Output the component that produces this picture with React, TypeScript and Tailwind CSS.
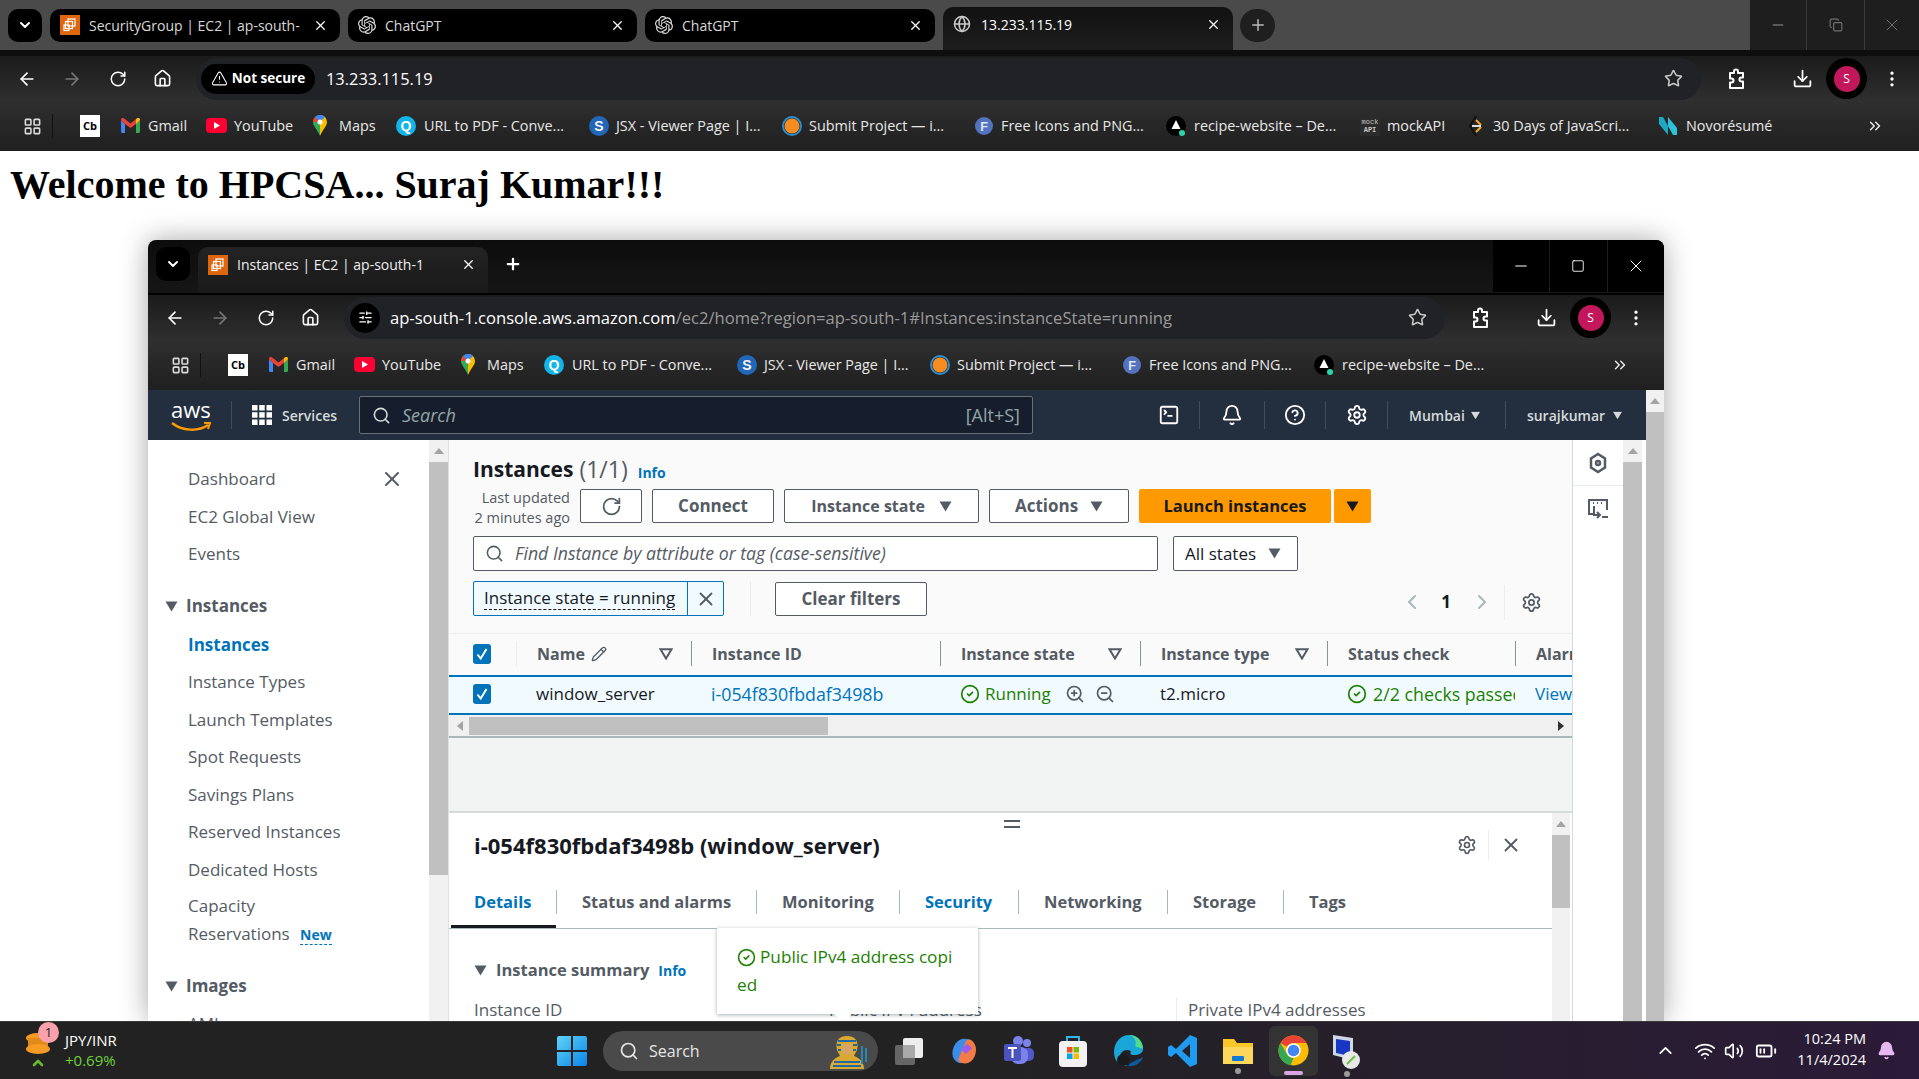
import React from 'react';
import {
  ArrowLeft, ArrowRight, RotateCw, Home, Star, Download, MoreVertical, ChevronDown, ChevronUp, Plus, X, Minus, Square, Copy,
  LayoutGrid, TriangleAlert, ChevronsRight, Search, SlidersHorizontal, Bell, CircleHelp, Settings, SquareTerminal, Pencil,
  CircleCheck, ZoomIn, ZoomOut, ChevronLeft, ChevronRight, Wifi, Volume2, BatteryMedium, Globe,
} from 'lucide-react';
import { SiOpenai } from 'react-icons/si';

const Ec2Icon = () => (
  <svg width="20" height="20" viewBox="0 0 20 20" className="shrink-0">
    <rect width="20" height="20" fill="#e0650f" />
    <g fill="none" stroke="#fff" strokeWidth="1.2">
      <rect x="8" y="4" width="7" height="7" />
      <rect x="5.5" y="6.5" width="7" height="7" />
      <rect x="4" y="10" width="5" height="5.5" />
    </g>
  </svg>
);

const GmailIcon = () => (
  <svg width="19" height="15" viewBox="0 0 19 15" className="shrink-0">
    <path d="M0 2v11.5A1.5 1.5 0 0 0 1.5 15H4V6z" fill="#4285f4" />
    <path d="M15 6v9h2.5a1.500 1.500 0 0 0 1.500-1.500V2z" fill="#34a853" />
    <path d="M0 2c0-2 2-2.500 3.200-1.500L9.500 5.500 15.800.5C17-.5 19 0 19 2L15 6 9.500 10 4 6z" fill="#ea4335" />
    <path d="M15 6l4-4c0-2-2-2.500-3.200-1.500L15 1.200z" fill="#fbbc04" />
  </svg>
);

const YoutubeIcon = () => (
  <svg width="21" height="15" viewBox="0 0 21 15" className="shrink-0">
    <rect width="21" height="15" rx="4" fill="#ff0033" />
    <path d="M8 4l6 3.500-6 3.500z" fill="#fff" />
  </svg>
);

const MapsIcon = () => (
  <svg width="14" height="21" viewBox="0 0 14 21" className="shrink-0">
    <path d="M7 0a7 7 0 0 0-7 7c0 4 4 7 7 14z" fill="#34a853" />
    <path d="M7 0a7 7 0 0 1 7 7c0 4-4 7-7 14z" fill="#fbbc04" />
    <path d="M2 2a7 7 0 0 1 10 0L7 7z" fill="#4285f4" />
    <path d="M0 7a7 7 0 0 1 2-5l5 5z" fill="#ea4335" />
    <circle cx="7" cy="7" r="2.500" fill="#fff" />
  </svg>
);

const CircleLetter = ({ bg, fg, letter, size = 20 }: { bg: string; fg: string; letter: string; size?: number }) => (
  <svg width={size} height={size} viewBox="0 0 20 20" className="shrink-0">
    <circle cx="10" cy="10" r="10" fill={bg} />
    <text x="10" y="15" textAnchor="middle" fontSize="14" fontWeight="700" fill={fg} fontFamily="Liberation Sans, sans-serif">{letter}</text>
  </svg>
);

const SubmitIcon = () => (
  <svg width="20" height="20" viewBox="0 0 20 20" className="shrink-0">
    <circle cx="10" cy="10" r="9" fill="none" stroke="#2a8fd0" strokeWidth="2" />
    <circle cx="10" cy="10" r="7.500" fill="#f68b1f" />
  </svg>
);

const RecipeIcon = () => (
  <svg width="20" height="20" viewBox="0 0 20 20" className="shrink-0">
    <circle cx="10" cy="10" r="10" fill="#000" />
    <path d="M10 4l4.500 9h-9z" fill="#fff" />
    <circle cx="16" cy="17" r="3" fill="#2dd4aa" />
  </svg>
);

const MockIcon = () => (
  <span className="shrink-0 w-5 h-5 flex flex-col items-center justify-center text-[7px] leading-[8px] font-['Liberation_Mono',monospace] text-[#c8c8c8] bg-[#2b2b2b]">
    <span>mock</span>
    <span className="font-bold">API</span>
  </span>
);

const ThirtyIcon = () => (
  <svg width="16" height="22" viewBox="0 0 16 22" className="shrink-0">
    <path d="M8 1L2 11l6 10" fill="none" stroke="#111" strokeWidth="2" />
    <path d="M8 5l5 5M8 17l5-5" fill="none" stroke="#f5a623" strokeWidth="2" />
    <path d="M4 11h9" stroke="#ddd" strokeWidth="2" />
  </svg>
);

const NovoIcon = () => (
  <svg width="20" height="20" viewBox="0 0 20 20" className="shrink-0">
    <path d="M1 1h4l5 9v9L1 8z" fill="#1ea7c5" />
    <path d="M19 19h-4l-5-9V1l9 11z" fill="#2cc3d8" />
  </svg>
);

const ExtensionIcon = () => (
  <svg width="20" height="22" viewBox="0 0 20 22" fill="none" stroke="currentColor" strokeWidth="2" className="shrink-0 ml-[26px]">
    <path d="M3 5h4V3.500a2 2 0 0 1 4 0V5h5v4.500h-1.500a2 2 0 0 0 0 4H16V20H3v-5.500h1.500a2 2 0 0 0 0-4H3z" strokeLinejoin="round" />
  </svg>
);

// start of each bookmark is fixed by its width
const bookmarks = [
  { w: 'w-[85px]', icon: <GmailIcon />, label: 'Gmail', gap: 'ml-[8px]' },
  { w: 'w-[107px]', icon: <YoutubeIcon />, label: 'YouTube', gap: 'ml-[7px]' },
  { w: 'w-[83px]', icon: <MapsIcon />, label: 'Maps', gap: 'ml-[12px]' },
  { w: 'w-[193px]', icon: <CircleLetter bg="#12b5ea" fg="#fff" letter="Q" />, label: 'URL to PDF - Conve...', gap: 'ml-[8px]' },
  { w: 'w-[193px]', icon: <CircleLetter bg="#2266b8" fg="#f6f6f6" letter="S" />, label: 'JSX - Viewer Page | I...', gap: 'ml-[7px]' },
  { w: 'w-[193px]', icon: <SubmitIcon />, label: 'Submit Project — i...', gap: 'ml-[7px]' },
  { w: 'w-[191px]', icon: <CircleLetter bg="#5472bd" fg="#dfe6f7" letter="F" size={18} />, label: 'Free Icons and PNG...', gap: 'ml-[8px]' },
  { w: 'w-[194px]', icon: <RecipeIcon />, label: 'recipe-website – De...', gap: 'ml-[8px]' },
  { w: 'w-[108px]', icon: <MockIcon />, label: 'mockAPI', gap: 'ml-[7px]' },
  { w: 'w-[190px]', icon: <ThirtyIcon />, label: '30 Days of JavaScri...', gap: 'ml-[9px]' },
  { w: 'w-[120px]', icon: <NovoIcon />, label: 'Novorésumé', gap: 'ml-[8px]' },
];

function Bookmarks({ count, right }: { count: number; right: string }) {
  return (
    <div className={`h-[50px] shrink-0 flex items-center bg-gradient-to-b from-[#2f2f2f] to-[#1f1f1f] text-[14.400px] text-[#e8e8e8] pl-[23px] ${right}`}>
      <LayoutGrid size={19} className="text-[#dcdcdc] shrink-0" />
      <span className="ml-[10px] w-px h-[24px] bg-[#111]" />
      <span className="ml-[27px] mr-[21px] w-[20px] h-[22px] bg-white text-black text-[11px] font-bold flex items-center justify-center shrink-0">Cb</span>
      {bookmarks.slice(0, count).map(b => (
        <span key={b.label} className={`${b.w} flex items-center shrink-0`}>
          {b.icon}
          <span className={`${b.gap} whitespace-nowrap`}>{b.label}</span>
        </span>
      ))}
      <ChevronsRight size={18} className="ml-auto text-[#e8e8e8]" />
    </div>
  );
}

function Toolbar({ children, pill }: { children: React.ReactNode; pill: string }) {
  return (
    <div className="h-[45px] shrink-0 flex items-center bg-gradient-to-b from-[#1b1b1b] to-[#2f2f2f] text-white">
      <ArrowLeft size={20} className="ml-[17px] shrink-0" />
      <ArrowRight size={20} className="ml-[25px] text-[#777] shrink-0" />
      <RotateCw size={18} className="ml-[27px] shrink-0" />
      <Home size={19} className="ml-[26px] shrink-0" />
      <div className={`ml-[24px] h-[42px] rounded-full bg-[#212226] flex items-center shrink-0 ${pill}`}>
        {children}
        <Star size={19} className="ml-auto mr-[18px] text-[#c8c8c8]" />
      </div>
      <ExtensionIcon />
      <Download size={21} className="ml-[45px] shrink-0" />
      <span className="ml-[13px] w-[41px] h-[41px] rounded-full bg-black flex items-center justify-center shrink-0">
        <span className="w-[26px] h-[26px] rounded-full bg-[#c2185b] text-[12px] flex items-center justify-center">S</span>
      </span>
      <MoreVertical size={20} className="ml-[15px] shrink-0" />
    </div>
  );
}

function ChromeTab({ icon, label, w, color }: { icon: React.ReactNode; label: string; w: string; color: string }) {
  return (
    <div className={`${w} h-[33px] flex items-center pl-[10px] pr-[12px] text-[14px] shrink-0 rounded-[10px] text-[#d8d8d8] ${color}`}>
      {icon}
      <span className="ml-[9px] whitespace-nowrap overflow-hidden flex-1">{label}</span>
      <X size={15} className="ml-[8px] text-white shrink-0" />
    </div>
  );
}

const Caret = ({ className }: { className?: string }) => (
  <svg width="13" height="11" viewBox="0 0 13 11" className={`shrink-0 ${className ?? ''}`}>
    <path d="M.5.500h12L6.500 10.500z" fill="currentColor" />
  </svg>
);

const FilterIcon = () => (
  <svg width="14" height="12" viewBox="0 0 14 12" className="shrink-0 text-[#545b64]">
    <path d="M1.500 1.200h11L7 10.500z" fill="none" stroke="currentColor" strokeWidth="2" />
  </svg>
);

function ScrollBar({ w, top, thumbH }: { w: string; top: string; thumbH: string }) {
  return (
    <div className={`${w} shrink-0 bg-[#f1f1f1] flex flex-col items-center overflow-hidden`}>
      <span className={`${top} flex items-center justify-center w-full shrink-0`}>
        <svg width="10" height="6" viewBox="0 0 10 6"><path d="M5 0l5 6H0z" fill="#a3a3a3" /></svg>
      </span>
      <span className={`${thumbH} w-full bg-[#c0c0c0] shrink-0`} />
    </div>
  );
}

const Btn = ({ w, children }: { w: string; children: React.ReactNode }) => (
  <button className={`${w} h-[34px] shrink-0 bg-white border border-[#545b64] rounded-[2px] text-[#545b64] font-bold text-[17px] flex items-center justify-center`}>
    {children}
  </button>
);

const navCls = 'h-[37.500px] flex items-center pl-[40px] text-[17px] shrink-0';
const navGrey = `${navCls} text-[#545b64]`;

function Sidebar() {
  return (
    <div className="w-[281px] shrink-0 bg-white pt-[20px] overflow-hidden">
      <div className={`${navGrey} pr-[25px] justify-between`}>
        Dashboard
        <X size={24} className="text-[#545b64]" strokeWidth={2} />
      </div>
      <div className={navGrey}>EC2 Global View</div>
      <div className={navGrey}>Events</div>
      <div className="h-[39px] mt-[14px] flex items-center pl-[17px] text-[#545b64] font-bold text-[17px]">
        <Caret className="mr-[8px]" />Instances
      </div>
      <div className={`${navCls} text-[#0073bb] font-bold`}>Instances</div>
      <div className={navGrey}>Instance Types</div>
      <div className={navGrey}>Launch Templates</div>
      <div className={navGrey}>Spot Requests</div>
      <div className={navGrey}>Savings Plans</div>
      <div className={navGrey}>Reserved Instances</div>
      <div className={navGrey}>Dedicated Hosts</div>
      <div className="pl-[40px] pt-[4px] text-[#545b64] text-[17px] leading-[28px]">
        <div>Capacity</div>
        <div>Reservations <span className="ml-[6px] text-[#0073bb] font-bold text-[14px] border-b border-dashed border-[#0073bb]">New</span></div>
      </div>
      <div className="h-[38px] mt-[18px] flex items-center pl-[17px] text-[#545b64] font-bold text-[17px]">
        <Caret className="mr-[8px]" />Images
      </div>
      <div className={navGrey}>AMIs</div>
    </div>
  );
}

const headBase = 'h-[25px] flex items-center border-l pl-[20px] font-bold text-[#545b64] text-[16px] shrink-0 overflow-hidden whitespace-nowrap';
const headCell = `${headBase} border-[#879596]`;
const rowCell = 'flex items-center pl-[20px] shrink-0 overflow-hidden whitespace-nowrap';

const Check = () => (
  <span className="w-[18px] h-[20px] rounded-[3px] bg-[#0073bb] flex items-center justify-center">
    <svg width="12" height="14" viewBox="0 0 12 14"><path d="M1.500 7.500l3.200 4L10.500 2" fill="none" stroke="#fff" strokeWidth="2" /></svg>
  </span>
);

function InstancesTable() {
  return (
    <>
      <div className="h-[42px] shrink-0 flex items-center border-t border-[#eaeded] bg-[#fafafa] pb-[2px]">
        <span className="w-[67px] shrink-0 pl-[24px] flex"><Check /></span>
        <div className={`w-[175px] ${headBase} border-[#eaeded] pr-[18px]`}>Name<Pencil size={16} className="ml-[6px]" /><span className="ml-auto"><FilterIcon /></span></div>
        <div className={`w-[249px] ${headCell}`}>Instance ID</div>
        <div className={`w-[200px] ${headCell} pr-[18px]`}>Instance state<span className="ml-auto"><FilterIcon /></span></div>
        <div className={`w-[187px] ${headCell} pr-[18px]`}>Instance type<span className="ml-auto"><FilterIcon /></span></div>
        <div className={`w-[188px] ${headCell}`}>Status check</div>
        <div className={`w-[57px] ${headCell}`}>Alarm status</div>
      </div>
      <div className="h-[40px] shrink-0 flex items-center border-y-2 border-[#0073bb] bg-[#f1faff] overflow-hidden pb-[2px]">
        <span className="w-[67px] shrink-0 pl-[24px] flex"><Check /></span>
        <div className={`w-[175px] ${rowCell} text-[17px] text-[#16191f]`}>window_server</div>
        <div className={`w-[249px] ${rowCell} text-[#0073bb] text-[17.800px]`}>i-054f830fbdaf3498b</div>
        <div className={`w-[200px] ${rowCell} text-[17px] text-[#1d8102]`}>
          <CircleCheck size={20} className="mr-[5px]" />Running
          <ZoomIn size={20} className="ml-[14px] text-[#545b64]" />
          <ZoomOut size={20} className="ml-[10px] text-[#545b64]" />
        </div>
        <div className={`w-[187px] ${rowCell} text-[17px] text-[#16191f]`}>t2.micro</div>
        <div className={`w-[188px] ${rowCell} text-[#1d8102] text-[17.800px]`}>
          <CircleCheck size={20} className="mr-[6px] shrink-0" />2/2 checks passed
        </div>
        <div className={`w-[57px] ${rowCell} text-[17px] text-[#0073bb]`}>View alarms</div>
      </div>
      <div className="h-[23px] shrink-0 flex items-center bg-[#f0f0f0] border-b-2 border-[#aab7b8]">
        <svg width="6" height="10" viewBox="0 0 6 10" className="ml-[8px]"><path d="M6 0v10L0 5z" fill="#a3a3a3" /></svg>
        <span className="ml-[6px] w-[359px] h-[18px] bg-[#c0c0c0]" />
        <svg width="6" height="10" viewBox="0 0 6 10" className="ml-auto mr-[8px]"><path d="M0 0v10l6-5z" fill="#333" /></svg>
      </div>
    </>
  );
}

const detailTabs = [
  { label: 'Status and alarms', w: 'w-[200px]' },
  { label: 'Monitoring', w: 'w-[143px]' },
  { label: 'Security', w: 'w-[119px]', blue: true },
  { label: 'Networking', w: 'w-[149px]' },
  { label: 'Storage', w: 'w-[116px]' },
  { label: 'Tags', w: 'w-[90px]' },
];

function DetailPanel() {
  return (
    <div className="flex-1 min-h-0 flex bg-white border-t-2 border-[#d5dbdb] overflow-hidden">
      <div className="w-[1103px] shrink-0 relative overflow-hidden">
        <div className="flex justify-center h-[16px] pt-[7px] pl-[22px]">
          <span className="w-[16px] h-[8px] border-y-2 border-[#545b64]" />
        </div>
        <div className="flex items-center h-[32px] pl-[25px] pr-[30px]">
          <span className="font-bold text-[22px] text-[#16191f]">i-054f830fbdaf3498b (window_server)</span>
          <Settings size={20} className="ml-auto text-[#545b64]" />
          <span className="w-px h-[30px] bg-[#eaeded] ml-[11px] mr-[11px]" />
          <X size={22} className="text-[#545b64]" />
        </div>
        <div className="h-[57px] mt-[11px] pt-[4px] flex items-center border-b border-[#a9b9bd] relative text-[16.500px] font-bold text-[#545b64]">
          <span className="w-[108px] pl-[25px] shrink-0 border-r border-[#aab7b8] text-[#0073bb]">Details</span>
          {detailTabs.map(t => (
            <span key={t.label} className={`${t.w} shrink-0 pl-[25px] ${t.label === 'Tags' ? '' : 'border-r border-[#aab7b8]'} ${t.blue ? 'text-[#0073bb]' : ''}`}>{t.label}</span>
          ))}
          <span className="absolute left-[2px] bottom-0 w-[105px] h-[3px] bg-[#16191f]" />
        </div>
        <div className="pl-[25px] pt-[29px] flex items-center text-[16.500px]">
          <Caret className="mr-[9px] text-[#545b64]" />
          <span className="font-bold text-[#545b64]">Instance summary</span>
          <span className="ml-[9px] text-[14px] font-bold text-[#0073bb]">Info</span>
        </div>
        <div className="pl-[25px] pt-[14px] flex text-[17px] text-[#545b64] whitespace-nowrap">
          <span className="w-[355px]">Instance ID</span>
          <span className="w-[347px]">Public IPv4 address</span>
          <span className="border-l border-[#eaeded] pl-[11px]">Private IPv4 addresses</span>
        </div>
        <div className="absolute left-[268px] top-[115px] w-[261px] h-[86px] bg-white shadow-[0_1px_4px_rgba(0,28,36,0.35)] px-[20px] pt-[15px] text-[#1d8102] text-[17.200px] leading-[28px] break-all">
          <CircleCheck size={19} className="inline mr-[4px] -mt-[2px]" />
          Public IPv4 address copied
          <span className="absolute left-[120px] -bottom-[6px] w-[12px] h-[12px] rotate-45 bg-white" />
        </div>
      </div>
      <ScrollBar w="w-[18px]" top="h-[22px]" thumbH="h-[73px]" />
    </div>
  );
}

function MainContent() {
  return (
    <div className="w-[1123px] shrink-0 flex flex-col bg-[#f2f3f3] overflow-hidden">
      <div className="h-[193px] shrink-0 bg-[#fafafa] pl-[24px] pr-[40px]">
        <div className="h-[49px] flex items-end pb-[3px]">
          <span className="text-[21px] font-bold text-[#16191f] leading-[34px]">Instances</span>
          <span className="ml-[6px] text-[23px] text-[#545b64] leading-[34px]">(1/1)</span>
          <span className="ml-[10px] mb-[3px] text-[14px] font-bold text-[#0073bb]">Info</span>
        </div>
        <div className="flex items-center h-[34px] gap-[10px]">
          <span className="w-[97px] mt-[4px] text-[14.500px] leading-[20px] text-[#545b64] text-right whitespace-nowrap">Last updated<br />2 minutes ago</span>
          <Btn w="w-[62px]"><RotateCw size={21} /></Btn>
          <Btn w="w-[122px]">Connect</Btn>
          <Btn w="w-[195px]"><span className="text-[16px]">Instance state</span><Caret className="ml-[14px]" /></Btn>
          <Btn w="w-[140px]">Actions<Caret className="ml-[12px]" /></Btn>
          <button className="w-[192px] h-[34px] bg-[#ff9900] rounded-[2px] text-[#16191f] font-bold text-[16.500px]">Launch instances</button>
          <button className="-ml-[7px] w-[37px] h-[34px] bg-[#ff9900] rounded-[2px] text-[#16191f] flex items-center justify-center"><Caret /></button>
        </div>
        <div className="flex items-center mt-[13px] h-[35px]">
          <div className="w-[685px] h-[35px] bg-white border border-[#545b64] rounded-[2px] flex items-center pl-[11px] text-[17.700px] italic text-[#545b64]">
            <Search size={19} className="mr-[11px]" />Find Instance by attribute or tag (case-sensitive)
          </div>
          <div className="ml-[15px] w-[125px] h-[35px] bg-white border border-[#545b64] rounded-[2px] flex items-center pl-[11px] text-[17px] text-[#16191f]">
            All states<Caret className="ml-[12px] text-[#545b64]" />
          </div>
        </div>
        <div className="flex items-center mt-[10px] h-[35px] -mr-[10px]">
          <div className="w-[251px] h-[35px] shrink-0 bg-[#f1faff] border border-[#0073bb] rounded-[2px] flex items-center text-[17px] text-[#16191f]">
            <span className="w-[213px] shrink-0 pl-[10px] pb-[1px] whitespace-nowrap overflow-hidden"><span className="border-b border-dashed border-[#16191f]">Instance state = running</span></span>
            <span className="flex-1 h-full border-l border-[#0073bb] flex items-center justify-center"><X size={22} className="text-[#545b64]" /></span>
          </div>
          <span className="ml-[26px] w-px h-[35px] bg-[#eaeded]" />
          <span className="ml-[24px]"><Btn w="w-[152px]">Clear filters</Btn></span>
          <div className="ml-auto flex items-center mt-[7px]">
            <ChevronLeft size={24} className="text-[#aab7b8]" strokeWidth={2} />
            <span className="ml-[17px] font-bold text-[17px] text-[#16191f]">1</span>
            <ChevronRight size={24} className="ml-[19px] text-[#aab7b8]" strokeWidth={2} />
            <span className="ml-[10px] w-px h-[35px] bg-[#eaeded]" />
            <Settings size={21} className="ml-[16px] text-[#545b64]" />
          </div>
        </div>
      </div>
      <InstancesTable />
      <div className="h-[73px] shrink-0 bg-[#f2f3f3]" />
      <DetailPanel />
    </div>
  );
}

function AwsNav() {
  return (
    <div className="h-[50px] shrink-0 flex items-center bg-[#232f3e] text-[#d5dbdb] text-[14px] font-semibold">
      <span className="ml-[23px] w-[40px] h-[36px] relative shrink-0 block">
        <span className="block text-[22px] leading-[24px] font-normal text-white">aws</span>
        <svg width="40" height="12" viewBox="0 0 40 12" className="absolute left-0 bottom-0">
          <path d="M1 2c10 8 26 9 36 2" fill="none" stroke="#ff9900" strokeWidth="2.500" />
          <path d="M33 2l6 0-2 6" fill="none" stroke="#ff9900" strokeWidth="2" />
        </svg>
      </span>
      <span className="ml-[20px] w-px h-[28px] bg-[#414d5c]" />
      <svg width="20" height="20" viewBox="0 0 20 20" className="ml-[20px] shrink-0" fill="#fff">
        <rect width="5.500" height="5.500" /><rect x="7.200" width="5.500" height="5.500" /><rect x="14.500" width="5.500" height="5.500" />
        <rect y="7.200" width="5.500" height="5.500" /><rect x="7.200" y="7.200" width="5.500" height="5.500" /><rect x="14.500" y="7.200" width="5.500" height="5.500" />
        <rect y="14.500" width="5.500" height="5.500" /><rect x="7.200" y="14.500" width="5.500" height="5.500" /><rect x="14.500" y="14.500" width="5.500" height="5.500" />
      </svg>
      <span className="ml-[10px] w-[56px] whitespace-nowrap">Services</span>
      <div className="ml-[21px] w-[674px] h-[38px] shrink-0 bg-[#161e2d] border border-[#687078] rounded-[2px] flex items-center px-[12px] font-normal text-[#95a5a6] text-[18px]">
        <Search size={19} className="text-[#d5dbdb]" />
        <span className="ml-[11px] italic">Search</span>
        <span className="ml-auto">[Alt+S]</span>
      </div>
      <SquareTerminal size={22} className="ml-[125px] shrink-0 text-white" />
      <span className="ml-[19px] w-px h-[28px] bg-[#414d5c]" />
      <Bell size={22} className="ml-[21px] shrink-0 text-white" />
      <span className="ml-[21px] w-px h-[28px] bg-[#414d5c]" />
      <CircleHelp size={22} className="ml-[19px] shrink-0 text-white" />
      <span className="ml-[19px] w-px h-[28px] bg-[#414d5c]" />
      <Settings size={22} className="ml-[20px] shrink-0 text-white" />
      <span className="ml-[19px] w-px h-[28px] bg-[#414d5c]" />
      <span className="ml-[21px]">Mumbai</span>
      <Caret className="ml-[4px] scale-75 text-[#d5dbdb]" />
      <span className="ml-[23px] w-px h-[28px] bg-[#414d5c]" />
      <span className="ml-[21px]">surajkumar</span>
      <Caret className="ml-[6px] scale-75 text-[#d5dbdb]" />
    </div>
  );
}

function InnerWindow() {
  return (
    <div className="ml-[148px] w-[1516px] h-[781px] rounded-t-[8px] overflow-hidden flex flex-col shadow-[0_0_28px_rgba(0,0,0,0.35)]">
      <div className="h-[55px] shrink-0 flex bg-gradient-to-b from-[#0c0c0c] to-[#161616] border-b-2 border-black">
        <span className="ml-[8px] mt-[7px] w-[34px] h-[34px] rounded-[10px] bg-black flex items-center justify-center text-white shrink-0"><ChevronDown size={16} strokeWidth={3} /></span>
        <div className="ml-[8px] mt-[7px] w-[290px] h-[46px] rounded-t-[10px] bg-gradient-to-b from-[#232323] to-[#1a1a1a] flex items-center pb-[11px] pl-[10px] pr-[12px] text-[14px] text-[#eee] shrink-0">
          <Ec2Icon />
          <span className="ml-[9px] flex-1 whitespace-nowrap">Instances | EC2 | ap-south-1</span>
          <X size={15} className="text-white" />
        </div>
        <Plus size={18} className="ml-[16px] mt-[15px] text-white shrink-0" strokeWidth={3} />
        <div className="ml-auto w-[171px] h-[52px] bg-black flex text-white shrink-0">
          <span className="flex-1 flex items-center justify-center"><Minus size={18} strokeWidth={1.500} /></span>
          <span className="flex-1 flex items-center justify-center border-l border-[#1d1d1d]"><Square size={14} strokeWidth={1.500} /></span>
          <span className="flex-1 flex items-center justify-center border-l border-[#1d1d1d]"><X size={20} strokeWidth={1.200} /></span>
        </div>
      </div>
      <Toolbar pill="w-[1101px]">
        <span className="ml-[6px] w-[30px] h-[30px] rounded-full bg-black flex items-center justify-center"><SlidersHorizontal size={15} /></span>
        <span className="ml-[10px] mt-[1px] text-[16.600px] whitespace-nowrap">ap-south-1.console.aws.amazon.com<span className="text-[#9a9a9a]">/ec2/home?region=ap-south-1#Instances:instanceState=running</span></span>
      </Toolbar>
      <Bookmarks count={8} right="pr-[35px]" />
      <div className="flex-1 min-h-0 flex">
        <div className="w-[1498px] shrink-0 flex flex-col">
          <AwsNav />
          <div className="flex-1 min-h-0 flex bg-white">
            <Sidebar />
            <ScrollBar w="w-[20px] border-r border-[#e0e0e0]" top="h-[22px]" thumbH="h-[413px]" />
            <MainContent />
            <div className="w-[51px] shrink-0 bg-white border-l border-[#d5dbdb]">
              <div className="h-[46px] border-b border-[#eaeded] flex items-center justify-center text-[#545b64]">
                <svg width="18" height="22" viewBox="0 0 18 22" fill="none" stroke="currentColor" strokeWidth="2.500"><path d="M9 2l7 4.500v9L9 20l-7-4.500v-9z" /><circle cx="9" cy="11" r="2" /></svg>
              </div>
              <div className="h-[46px] flex items-center justify-center text-[#545b64]">
                <svg width="22" height="22" viewBox="0 0 22 22" fill="none" stroke="currentColor" strokeWidth="2"><path d="M6 16H2V2h18v10" /><path d="M6 5h1M10 5h1M14 5h1" /><path d="M7 8v9h5M10 14l3 3-3 3M15 19h6" /></svg>
              </div>
            </div>
            <ScrollBar w="w-[19px]" top="h-[22px]" thumbH="h-[600px]" />
          </div>
        </div>
        <ScrollBar w="w-[18px]" top="h-[22px]" thumbH="h-[620px]" />
      </div>
    </div>
  );
}

function OuterChrome() {
  return (
    <>
      <div className="h-[50px] shrink-0 flex items-center bg-[#4a4a4a]">
        <span className="ml-[8px] w-[34px] h-[33px] rounded-[10px] bg-black flex items-center justify-center text-white shrink-0"><ChevronDown size={16} strokeWidth={3} /></span>
        <span className="ml-[8px] flex gap-[8px]">
          <ChromeTab w="w-[290px]" color="bg-black" icon={<Ec2Icon />} label="SecurityGroup | EC2 | ap-south-" />
          <ChromeTab w="w-[289px]" color="bg-black" icon={<SiOpenai size={18} className="text-[#ddd] shrink-0" />} label="ChatGPT" />
          <ChromeTab w="w-[290px]" color="bg-black" icon={<SiOpenai size={18} className="text-[#ddd] shrink-0" />} label="ChatGPT" />
        </span>
        <div className="ml-[8px] w-[290px] h-[43px] self-end rounded-t-[10px] bg-gradient-to-b from-[#111] to-[#1e1e1e] flex items-center pb-[9px] pl-[10px] pr-[12px] text-[14px] text-white shrink-0">
          <Globe size={18} className="text-[#ccc] shrink-0" />
          <span className="ml-[10px] flex-1">13.233.115.19</span>
          <X size={15} />
        </div>
        <span className="ml-[7px] w-[35px] h-[33px] rounded-full bg-[#1f1f1f] flex items-center justify-center text-[#bbb] shrink-0"><Plus size={18} /></span>
        <div className="ml-auto w-[169px] h-[50px] bg-[#1e1e1e] flex text-[#6f6f6f] shrink-0">
          <span className="w-[56px] flex items-center justify-center"><Minus size={16} /></span>
          <span className="w-[58px] flex items-center justify-center border-l border-[#3a3a3a]"><Copy size={14} /></span>
          <span className="flex-1 flex items-center justify-center border-l border-[#3a3a3a]"><X size={20} strokeWidth={1.200} /></span>
        </div>
      </div>
      <div className="h-[6px] shrink-0 bg-[#0e0e0e]" />
      <Toolbar pill="w-[1505px]">
        <span className="ml-[5px] h-[30px] w-[114px] rounded-full bg-black flex items-center justify-center gap-[4px] text-[13.500px] font-bold"><TriangleAlert size={17} strokeWidth={1.500} />Not secure</span>
        <span className="ml-[11px] mt-[1px] text-[16.400px]">13.233.115.19</span>
      </Toolbar>
      <Bookmarks count={11} right="pr-[35px]" />
    </>
  );
}

function Taskbar() {
  const tile = 'w-[45px] flex flex-col items-center shrink-0';
  return (
    <div className="h-[58px] shrink-0 flex items-center bg-gradient-to-r from-[#222] via-[#222] to-[#2b1a38] text-white border-t border-[#3a3a3a] relative z-10">
      <div className="ml-[25px] w-[26px] flex flex-col items-center relative">
        <svg width="26" height="26" viewBox="0 0 26 26"><ellipse cx="13" cy="8" rx="12" ry="5" fill="#f59a23" /><rect x="3" y="8" width="20" height="10" fill="#e08a1a" /><ellipse cx="13" cy="19" rx="12" ry="5" fill="#f59a23" /></svg>
        <ChevronUp size={16} strokeWidth={4} className="text-[#66b92e] -mt-[1px]" />
        <span className="absolute -top-[8px] left-[13px] w-[21px] h-[21px] rounded-full bg-[#f8a1ad] text-[#222] text-[13px] flex items-center justify-center">1</span>
      </div>
      <div className="ml-[14px] w-[492px] shrink-0 text-[15px] leading-[20px] pb-[2px]">
        <div>JPY/INR</div>
        <div className="text-[#6fcf3c]">+0.69%</div>
      </div>
      <svg width="30" height="30" viewBox="0 0 30 30" className="shrink-0">
        <defs><linearGradient id="w" x1="0" y1="0" x2="1" y2="1"><stop offset="0" stopColor="#5fd4f8" /><stop offset="1" stopColor="#0a84e8" /></linearGradient></defs>
        <path d="M0 2a2 2 0 0 1 2-2h12v14H0zM16 0h12a2 2 0 0 1 2 2v12H16zM0 16h14v14H2a2 2 0 0 1-2-2zM16 16h14v12a2 2 0 0 1-2 2H16z" fill="url(#w)" />
      </svg>
      <div className="ml-[16px] w-[275px] h-[40px] rounded-full bg-[#4a4a4a] flex items-center pl-[16px] pr-[8px] shrink-0 text-[#e6e6e6] text-[16px]">
        <Search size={20} />
        <span className="ml-[10px]">Search</span>
        <svg width="46" height="38" viewBox="0 0 46 38" className="ml-auto">
          <path d="M6 37c0-8 5-11 10-13-1-3-5-6-3-14 2-8 18-8 20 0 2 8-2 11-3 14 5 2 10 5 10 13z" fill="#d9a931" />
          <path d="M14 9h18M13 13h4M29 13h4M14 18h3M29 18h3M10 30h26M9 34h28" stroke="#1f6aa5" strokeWidth="2" />
          <ellipse cx="23" cy="17" rx="5" ry="6" fill="#d6a565" />
          <path d="M38 14v18M42 16v14" stroke="#2a86b5" strokeWidth="2" />
        </svg>
      </div>
      <span className={`${tile} ml-[8px]`}>
        <svg width="32" height="32" viewBox="0 0 32 32"><rect x="2" y="10" width="20" height="20" rx="2" fill="#666" /><rect x="10" y="3" width="20" height="20" rx="2" fill="#eee" /><rect x="10" y="10" width="12" height="13" fill="#aaa" /></svg>
      </span>
      <span className={`${tile} ml-[10px]`}>
        <svg width="32" height="32" viewBox="0 0 32 32"><path d="M6 24C2 18 6 6 14 4c4-1 8 0 10 3L16 26c-3 4-7 2-10-2z" fill="#3b8de8" /><path d="M26 8c4 5 2 17-6 20-4 1-8 0-10-3L18 6c3-3 6-1 8 2z" fill="#f47b45" /><path d="M13 14l6-5 5 4-6 6z" fill="#9a5cf0" /></svg>
      </span>
      <span className={`${tile} ml-[10px]`}>
        <svg width="32" height="32" viewBox="0 0 32 32"><circle cx="24" cy="8" r="4" fill="#7b83eb" /><circle cx="15" cy="6" r="5" fill="#7b83eb" /><rect x="19" y="13" width="12" height="13" rx="5" fill="#5059c9" /><rect x="8" y="12" width="17" height="17" rx="7" fill="#7b83eb" /><rect x="1" y="9" width="17" height="17" rx="2" fill="#4b53bc" /><path d="M5 13h9M9.500 13v10" stroke="#fff" strokeWidth="2" /></svg>
      </span>
      <span className={`${tile} ml-[9px]`}>
        <svg width="30" height="34" viewBox="0 0 30 34"><path d="M9 8V3h12v5" fill="none" stroke="#2fb6e8" strokeWidth="2" /><rect x="1" y="7" width="28" height="26" rx="4" fill="#f2f2f2" /><rect x="9" y="13" width="5.500" height="5.500" fill="#f25022" /><rect x="15.500" y="13" width="5.500" height="5.500" fill="#7fba00" /><rect x="9" y="19.500" width="5.500" height="5.500" fill="#00a4ef" /><rect x="15.500" y="19.500" width="5.500" height="5.500" fill="#ffb900" /></svg>
      </span>
      <span className={`${tile} ml-[10px]`}>
        <svg width="32" height="34" viewBox="0 0 32 34"><path d="M2 18C2 8 9 1 17 1c8 0 14 6 14 14 0 4-4 6-9 6-4 0-4-2-3-4-6-3-11 1-11 6 0 4 3 8 8 9C8 33 2 27 2 18z" fill="#1ba6d8" /><path d="M31 15c0-8-6-14-14-14 6 2 8 7 6 11 3 2 8 2 8 3z" fill="#4fdc8b" /><path d="M16 32c7 1 13-3 15-9-4 3-12 4-15 9z" fill="#0c59a4" /><circle cx="11" cy="26" r="6" fill="#1b1b1b" /></svg>
      </span>
      <span className={`${tile} ml-[10px]`}>
        <svg width="30" height="34" viewBox="0 0 30 34"><path d="M22 1l7 3v26l-7 3L8 19l-5 4-3-2V13l3-2 5 4zM22 10l-8 7 8 7z" fill="#1f9cf0" /></svg>
      </span>
      <span className={`${tile} ml-[10px] relative`}>
        <svg width="32" height="30" viewBox="0 0 32 30"><path d="M1 3h11l3 4h16v21H1z" fill="#f9c527" /><rect x="1" y="11" width="30" height="17" fill="#fbd75b" /><rect x="10" y="20" width="12" height="5" rx="1" fill="#0f78d4" /></svg>
        <span className="absolute -bottom-[8px] w-[6px] h-[6px] rounded-full bg-[#9a9a9a]" />
      </span>
      <span className="ml-[9px] w-[49px] h-[50px] rounded-[6px] bg-[#333] flex flex-col items-center justify-center relative shrink-0">
        <svg width="31" height="31" viewBox="0 0 32 32">
          <circle cx="16" cy="16" r="15.500" fill="#fbbc04" />
          <path d="M16 .5a15.500 15.500 0 0 1 13.400 7.750H16a7.750 7.750 0 0 0-6.700 3.900L2.600 8.250A15.500 15.500 0 0 1 16 .5z" fill="#ea4335" />
          <path d="M2.600 8.250L9.300 19.900a7.750 7.750 0 0 0 6.700 3.850l-3.100 7.450A15.500 15.500 0 0 1 2.600 8.250z" fill="#34a853" />
          <circle cx="16" cy="16" r="7.500" fill="#fff" /><circle cx="16" cy="16" r="6" fill="#4285f4" />
        </svg>
        <span className="absolute bottom-[1px] w-[19px] h-[4px] rounded-full bg-[#dba6e6]" />
      </span>
      <span className="ml-[9px] w-[40px] flex flex-col items-center relative shrink-0">
        <svg width="32" height="36" viewBox="0 0 32 36"><path d="M2 2l20 3v22L2 22z" fill="#cfd8e6" /><path d="M5 6l14 2v15L5 20z" fill="#1736c4" /><circle cx="20" cy="27" r="9" fill="#e8e8e8" /><path d="M16 31l8-8" stroke="#6cbd45" strokeWidth="2" /></svg>
        <span className="absolute -bottom-[8px] w-[6px] h-[6px] rounded-full bg-[#9a9a9a]" />
      </span>
      <ChevronUp size={21} className="ml-[288px] shrink-0" />
      <Wifi size={22} className="ml-[18px] shrink-0" />
      <Volume2 size={20} className="ml-[8px] shrink-0" />
      <BatteryMedium size={22} className="ml-[11px] shrink-0" />
      <div className="ml-[11px] w-[78px] text-right text-[14.500px] leading-[21px] pb-[3px] shrink-0">
        <div>10:24 PM</div>
        <div>11/4/2024</div>
      </div>
      <Bell size={19} fill="#e5b8f0" className="ml-[11px] text-[#e5b8f0] shrink-0" />
    </div>
  );
}

export default function App() {
  return (
    <div className="w-[1919px] h-[1079px] overflow-hidden flex flex-col bg-white font-['Open_Sans',sans-serif]">
      <OuterChrome />
      <div className="h-[870px] shrink-0 overflow-hidden bg-white">
        <h1 className="pl-[10px] pt-[6px] h-[89px] font-['Liberation_Serif',serif] font-bold text-[40px] leading-[56px] text-black whitespace-nowrap">Welcome to HPCSA... Suraj Kumar!!!</h1>
        <InnerWindow />
      </div>
      <Taskbar />
    </div>
  );
}
